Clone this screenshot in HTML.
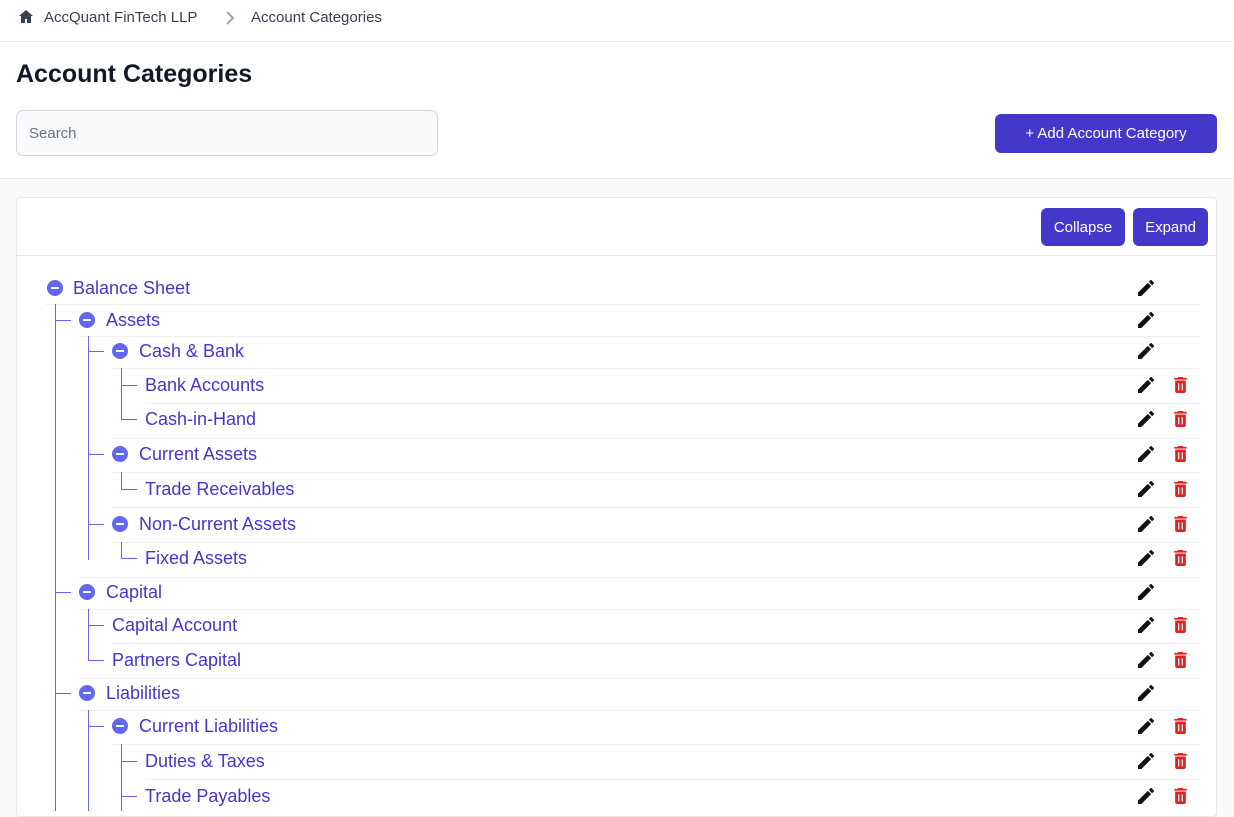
<!DOCTYPE html>
<html><head><meta charset="utf-8"><style>
*{margin:0;padding:0;box-sizing:border-box}
body{width:1234px;height:811px;overflow:hidden;font-family:"Liberation Sans",sans-serif;background:#f8f9fb;position:relative}
.top{position:absolute;left:0;top:0;width:1234px;height:179px;background:#fff;border-bottom:1px solid #e5e7eb}
.bc{position:absolute;top:9px;font-size:15px;color:#374151}
h1{position:absolute;left:16px;top:60px;font-size:25px;font-weight:bold;color:#111827}
.search{position:absolute;left:16px;top:110px;width:422px;height:46px;border:1px solid #d1d5db;border-radius:7px;background:#f9fafb;font-size:15px;color:#6b7280;padding:14px 12px}
.btn{position:absolute;background:#4338ca;color:#fff;border-radius:6px;font-size:15px;text-align:center}
.card{position:absolute;left:16px;top:197px;width:1201px;height:620px;background:#fff;border:1px solid #e5e7eb;border-radius:4px}
.hd{position:absolute;left:16px;top:255px;width:1201px;height:1px;background:#e5e7eb}
.row{position:absolute;height:1px;background:#f0f0f3;right:34px}
.t{position:absolute;font-size:18px;color:#4338ca;line-height:20px}
.c{position:absolute;width:16px;height:16px;border-radius:50%;background:#6366f1}
.c:after{content:"";position:absolute;left:4px;top:7px;width:8px;height:2px;background:#fff}
.v{position:absolute;width:1px;background:#6366f1}
.h{position:absolute;height:1px;background:#6366f1}
.p{position:absolute;left:1138px;width:16px;height:16px;margin-top:1px}
.d{position:absolute;left:1174px;width:13px;height:16px;margin-top:1px}
</style></head><body>
<div class="top"></div>
<svg style="position:absolute;left:19px;top:10px" width="14" height="13" viewBox="0 0 14 13"><path d="M7 0L0 6h2v7h4V9h2v4h4V6h2z" fill="#374151"/></svg>
<div class="bc" style="left:44px">AccQuant FinTech LLP</div>
<svg style="position:absolute;left:225px;top:11px" width="10" height="14"><path d="M2 1l6 6-6 6" stroke="#9ca3af" stroke-width="2" fill="none"/></svg>
<div class="bc" style="left:251px">Account Categories</div>
<div style="position:absolute;left:0;top:41px;width:1234px;height:1px;background:#e5e7eb"></div>
<h1>Account Categories</h1>
<div class="search">Search</div>
<div class="btn" style="left:995px;top:114px;width:222px;height:39px;line-height:40px">+ Add Account Category</div>
<div class="card"></div>
<div class="btn" style="left:1041px;top:208px;width:84px;height:38px;line-height:40px">Collapse</div>
<div class="btn" style="left:1133px;top:208px;width:75px;height:38px;line-height:40px">Expand</div>
<div class="hd"></div>

<div class="row" style="left:46px;top:304px"></div>
<div class="row" style="left:79px;top:336px"></div>
<div class="row" style="left:112px;top:368px"></div>
<div class="row" style="left:145px;top:403px"></div>
<div class="row" style="left:112px;top:438px"></div>
<div class="row" style="left:112px;top:472px"></div>
<div class="row" style="left:112px;top:507px"></div>
<div class="row" style="left:112px;top:542px"></div>
<div class="row" style="left:79px;top:577px"></div>
<div class="row" style="left:79px;top:609px"></div>
<div class="row" style="left:112px;top:643px"></div>
<div class="row" style="left:79px;top:678px"></div>
<div class="row" style="left:79px;top:710px"></div>
<div class="row" style="left:112px;top:744px"></div>
<div class="row" style="left:145px;top:779px"></div>

<div class="v" style="left:55px;top:304px;height:507px"></div>
<div class="v" style="left:88px;top:336px;height:224px"></div>
<div class="v" style="left:121px;top:368px;height:51px"></div>
<div class="v" style="left:121px;top:472px;height:17px"></div>
<div class="v" style="left:121px;top:542px;height:16px"></div>
<div class="v" style="left:88px;top:609px;height:51px"></div>
<div class="v" style="left:88px;top:710px;height:101px"></div>
<div class="v" style="left:121px;top:744px;height:67px"></div>
<div class="h" style="left:55px;top:320px;width:16px"></div>
<div class="h" style="left:55px;top:592px;width:16px"></div>
<div class="h" style="left:55px;top:693px;width:16px"></div>
<div class="h" style="left:88px;top:351px;width:16px"></div>
<div class="h" style="left:88px;top:454px;width:16px"></div>
<div class="h" style="left:88px;top:524px;width:16px"></div>
<div class="h" style="left:88px;top:625px;width:16px"></div>
<div class="h" style="left:88px;top:660px;width:16px"></div>
<div class="h" style="left:88px;top:726px;width:16px"></div>
<div class="h" style="left:121px;top:385px;width:16px"></div>
<div class="h" style="left:121px;top:419px;width:16px"></div>
<div class="h" style="left:121px;top:489px;width:16px"></div>
<div class="h" style="left:121px;top:558px;width:16px"></div>
<div class="h" style="left:121px;top:761px;width:16px"></div>
<div class="h" style="left:121px;top:796px;width:16px"></div>

<div class="c" style="left:47px;top:280px"></div><div class="t" style="left:73px;top:278px">Balance Sheet</div>
<div class="c" style="left:79px;top:312px"></div><div class="t" style="left:106px;top:310px">Assets</div>
<div class="c" style="left:112px;top:343px"></div><div class="t" style="left:139px;top:341px">Cash &amp; Bank</div>
<div class="t" style="left:145px;top:375px">Bank Accounts</div>
<div class="t" style="left:145px;top:409px">Cash-in-Hand</div>
<div class="c" style="left:112px;top:446px"></div><div class="t" style="left:139px;top:444px">Current Assets</div>
<div class="t" style="left:145px;top:479px">Trade Receivables</div>
<div class="c" style="left:112px;top:516px"></div><div class="t" style="left:139px;top:514px">Non-Current Assets</div>
<div class="t" style="left:145px;top:548px">Fixed Assets</div>
<div class="c" style="left:79px;top:584px"></div><div class="t" style="left:106px;top:582px">Capital</div>
<div class="t" style="left:112px;top:615px">Capital Account</div>
<div class="t" style="left:112px;top:650px">Partners Capital</div>
<div class="c" style="left:79px;top:685px"></div><div class="t" style="left:106px;top:683px">Liabilities</div>
<div class="c" style="left:112px;top:718px"></div><div class="t" style="left:139px;top:716px">Current Liabilities</div>
<div class="t" style="left:145px;top:751px">Duties &amp; Taxes</div>
<div class="t" style="left:145px;top:786px">Trade Payables</div>

<svg width="0" height="0" style="position:absolute"><defs>
<symbol id="pen" viewBox="3 3 18 18"><path d="M3 17.25V21h3.75L17.81 9.94l-3.75-3.75L3 17.25zM20.71 7.04a1 1 0 000-1.41l-2.34-2.34a1 1 0 00-1.41 0l-1.83 1.83 3.75 3.75 1.83-1.83z" fill="#111"/></symbol>
<symbol id="bin" viewBox="5 3 14 18"><path d="M6 19c0 1.1.9 2 2 2h8c1.1 0 2-.9 2-2V7H6v12zM19 4h-3.5l-1-1h-5l-1 1H5v2h14V4z" fill="#dc2626"/><path d="M10 10v8M14 10v8" stroke="#fff" stroke-width="1.3"/></symbol>
</defs></svg>
<svg class="p" style="top:279px"><use href="#pen"/></svg>
<svg class="p" style="top:311px"><use href="#pen"/></svg>
<svg class="p" style="top:342px"><use href="#pen"/></svg>
<svg class="p" style="top:376px"><use href="#pen"/></svg><svg class="d" style="top:376px"><use href="#bin"/></svg>
<svg class="p" style="top:410px"><use href="#pen"/></svg><svg class="d" style="top:410px"><use href="#bin"/></svg>
<svg class="p" style="top:445px"><use href="#pen"/></svg><svg class="d" style="top:445px"><use href="#bin"/></svg>
<svg class="p" style="top:480px"><use href="#pen"/></svg><svg class="d" style="top:480px"><use href="#bin"/></svg>
<svg class="p" style="top:515px"><use href="#pen"/></svg><svg class="d" style="top:515px"><use href="#bin"/></svg>
<svg class="p" style="top:549px"><use href="#pen"/></svg><svg class="d" style="top:549px"><use href="#bin"/></svg>
<svg class="p" style="top:583px"><use href="#pen"/></svg>
<svg class="p" style="top:616px"><use href="#pen"/></svg><svg class="d" style="top:616px"><use href="#bin"/></svg>
<svg class="p" style="top:651px"><use href="#pen"/></svg><svg class="d" style="top:651px"><use href="#bin"/></svg>
<svg class="p" style="top:684px"><use href="#pen"/></svg>
<svg class="p" style="top:717px"><use href="#pen"/></svg><svg class="d" style="top:717px"><use href="#bin"/></svg>
<svg class="p" style="top:752px"><use href="#pen"/></svg><svg class="d" style="top:752px"><use href="#bin"/></svg>
<svg class="p" style="top:787px"><use href="#pen"/></svg><svg class="d" style="top:787px"><use href="#bin"/></svg>
</body></html>
